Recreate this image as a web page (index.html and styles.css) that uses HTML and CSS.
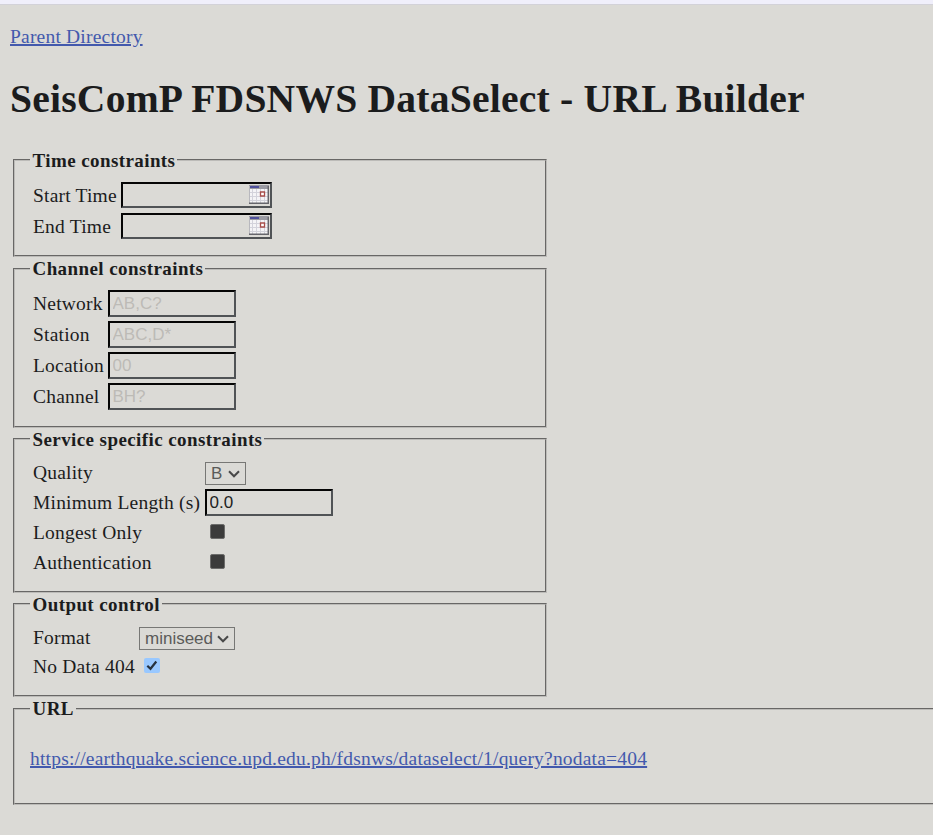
FILE: index.html
```html
<!DOCTYPE html>
<html lang="en">
<head>
<meta charset="utf-8">
<title>SeisComP FDSNWS DataSelect - URL Builder</title>
<link rel="stylesheet" href="styles.css">
</head>
<body>
<svg class="defs" width="0" height="0" aria-hidden="true">
  <symbol id="calendar" viewBox="0 0 20 19">
    <path fill="#f4f4f6" d="M0 0h20v19H0z"/>
    <path fill="#9a9aa2" d="M0 0h20v4H0z"/>
    <path fill="#4f509b" d="M1 1h9v2H1z"/>
    <path stroke="#d3d3db" fill="none" d="M3.5 4v14M7.5 4v14M11.5 4v14M15.5 4v14M1 7.5h18M1 11.5h18M1 15.5h18"/>
    <path stroke="#b8b8be" fill="none" d="M.5 1v17"/>
    <path stroke="#66666c" stroke-width="1.5" fill="none" d="M0 18.3h19.3V1"/>
    <path stroke="#a84f4c" stroke-width="1.3" fill="#fff" d="M11.5 7h4v4h-4z"/>
  </symbol>
  <symbol id="chevron" viewBox="0 0 12 8">
    <path d="M1 1.3l5 5 5-5" fill="none" stroke="#484848" stroke-width="2"/>
  </symbol>
</svg>
<div class="strip"></div>
<main>
  <a class="parent" href="#">Parent Directory</a>
  <h1>SeisComP FDSNWS DataSelect - URL Builder</h1>

  <fieldset class="time">
    <legend>Time constraints</legend>
    <div class="grid">
      <label class="lowered">Start Time</label>
      <div class="date"><input type="text"><svg><use href="#calendar"/></svg></div>
      <label class="lowered">End Time</label>
      <div class="date"><input type="text"><svg><use href="#calendar"/></svg></div>
    </div>
  </fieldset>

  <fieldset class="channel">
    <legend>Channel constraints</legend>
    <div class="grid">
      <label>Network</label><input type="text" placeholder="AB,C?">
      <label>Station</label><input type="text" placeholder="ABC,D*">
      <label>Location</label><input type="text" placeholder="00">
      <label>Channel</label><input type="text" placeholder="BH?">
    </div>
  </fieldset>

  <fieldset class="service">
    <legend>Service specific constraints</legend>
    <div class="grid">
      <label class="raised">Quality</label><div class="select quality">B<svg><use href="#chevron"/></svg></div>
      <label>Minimum Length (s)</label><input type="text" value="0.0">
      <label class="lowered">Longest Only</label><span class="box"></span>
      <label class="lowered">Authentication</label><span class="box"></span>
    </div>
  </fieldset>

  <fieldset class="output">
    <legend>Output control</legend>
    <div class="grid">
      <label class="raised">Format</label><div class="select format">miniseed<svg><use href="#chevron"/></svg></div>
      <label>No Data 404</label>
      <span class="box checked"><svg viewBox="0 0 16 15"><path d="M3.3 7.7l3.2 3.1 5.8-7.3" fill="none" stroke="#26323f" stroke-width="2.2"/></svg></span>
    </div>
  </fieldset>

  <fieldset class="url">
    <legend>URL</legend>
    <a href="#">https://earthquake.science.upd.edu.ph/fdsnws/dataselect/1/query?nodata=404</a>
  </fieldset>
</main>
</body>
</html>
```
FILE: styles.css
```css
* { box-sizing: border-box; }
html { background: #dbdad6; }
body {
  margin: 0;
  height: 835px;
  overflow: hidden;
  color: #1b1c1d;
  font: 19.5px/22px "Liberation Serif", "Times New Roman", serif;
  letter-spacing: .2px;
}
.defs { display: block; }
.strip { height: 5px; background: #f0effb; border-bottom: 1px solid #d3d2d9; }
main { padding: 21px 0 0 10px; }
a { color: #4359ad; text-decoration-thickness: 2px; text-underline-offset: 1px; white-space: nowrap; }
.parent { display: block; width: max-content; }
h1 { margin: 29px 0 27px; font-size: 39.6px; line-height: 45px; letter-spacing: .22px; white-space: nowrap; }
fieldset {
  width: 534px;
  margin: 0 0 0 3px;
  padding: 0 0 0 17px;
  border: 2px groove #bcbbb8;
}
legend { height: 22px; margin-left: -2px; padding: 0 2px 0 2.5px; font-size: 19px; font-weight: bold; letter-spacing: .41px; white-space: nowrap; }
.time legend, .service legend, .output legend { line-height: 24px; }
.grid { display: grid; align-items: center; justify-content: start; justify-items: start; }
label { padding-left: 1px; white-space: nowrap; }
.raised { margin-top: -2px; }
.lowered { margin-top: 2px; }
input, .select { font: 17px "Liberation Sans", Arial, sans-serif; letter-spacing: 0; }
input {
  width: 128px;
  height: 27px;
  margin: 0;
  padding: 0 2.5px;
  color: #222;
  background: transparent;
  border: 2px solid;
  border-color: #050505 #505356 #505356 #050505;
  border-radius: 0;
}
input::placeholder { color: #bdbbb6; opacity: 1; }
.time { height: 108px; }
.time .grid { grid-template-columns: 89px auto; grid-auto-rows: 30px; row-gap: 1px; padding-top: 9px; }
.date { position: relative; height: 26px; }
.date input { display: block; width: 151px; height: 26px; }
.date svg { position: absolute; top: 3px; right: 3px; width: 20px; height: 19px; }
.channel { height: 170px; margin-top: 1px; }
.channel .grid { grid-template-columns: 76px auto; grid-auto-rows: 31px; padding-top: 8px; }
.service { height: 165px; }
.service .grid { grid-template-columns: 173px auto; grid-template-rows: 29px 29px 30px 30px; padding-top: 9px; }
.select {
  display: flex;
  align-items: center;
  justify-content: space-between;
  height: 23px;
  padding: 0 5px;
  border: 1px solid #777775;
  color: #5a5a59;
}
.select svg { width: 12px; height: 8px; }
.quality { width: 41px; }
.format { width: 96px; }
.box { width: 15px; height: 15px; margin: -2px 0 0 5px; background: #3b3b3b; border: 1px solid #6c6c6b; border-radius: 2px; }
.output { height: 104px; }
.output .grid { grid-template-columns: 107px auto; grid-template-rows: 29px 27px; padding-top: 9px; }
.checked { width: 16px; background: #99c8ff; border: 0; }
.checked svg { display: block; width: 16px; height: 15px; }
.url { width: 940px; height: 107px; margin-top: 1px; padding-left: 15px; }
.url legend { margin-left: 0; }
.url a { display: block; width: max-content; margin-top: 28px; }
```
